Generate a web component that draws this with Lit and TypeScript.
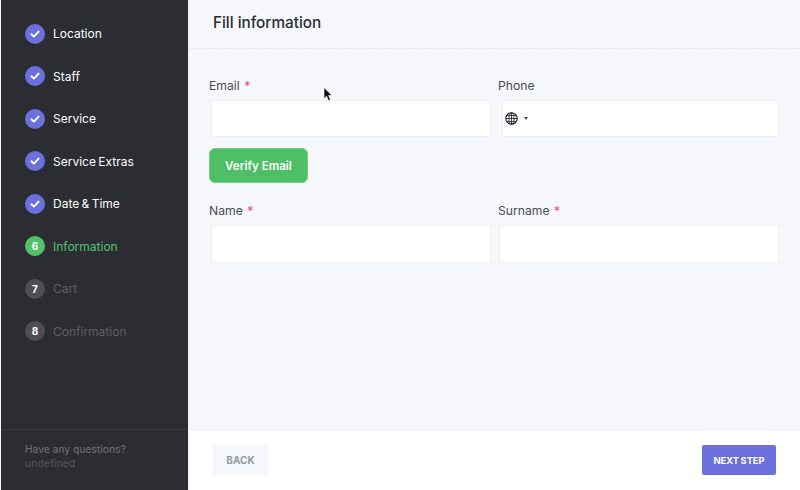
import { LitElement, html, css, svg } from "lit";
import { customElement } from "lit/decorators.js";

const steps = [
  { label: "Location", state: "done" },
  { label: "Staff", state: "done" },
  { label: "Service", state: "done" },
  { label: "Service Extras", state: "done" },
  { label: "Date & Time", state: "done" },
  { label: "Information", state: "active", n: 6 },
  { label: "Cart", state: "todo", n: 7 },
  { label: "Confirmation", state: "todo", n: 8 },
];

const check = svg`<svg width="10" height="10" viewBox="0 0 10 10"><path d="M1.4 5.3 L3.9 7.6 L8.6 2.6" fill="none" stroke="#fff" stroke-width="1.9" stroke-linecap="round" stroke-linejoin="round"/></svg>`;

const globe = svg`<svg width="13" height="13" viewBox="0 0 13 13" fill="none" stroke="#2c2e33" stroke-width="0.9"><circle cx="6.5" cy="6.5" r="5.7" stroke-width="1.2"/><ellipse cx="6.5" cy="6.5" rx="2.6" ry="5.7"/><path d="M6.5 .8V12.2M.8 6.5H12.2M1.6 3.6H11.4M1.6 9.4H11.4"/></svg>`;

@customElement("app-root")
export class AppRoot extends LitElement {
  static styles = css`
    :host { display: block; width: 800px; height: 490px; position: relative; overflow: hidden; font-family: "Inter", "Liberation Sans", sans-serif; }
    .page { display: flex; height: 490px; background: #f5f7fb; }
    .side { width: 187px; margin-left: 1px; flex: none; background: #2b2d33; display: flex; flex-direction: column; }
    .steps { flex: 1; padding-top: 12.25px; display: flex; flex-direction: column; }
    .step { height: 42.5px; display: flex; align-items: center; gap: 8px; padding-left: 24px; font-size: 12px; word-spacing: -1px; color: #fff; }
    .dot { width: 20px; height: 20px; border-radius: 50%; display: flex; align-items: center; justify-content: center; font-size: 10px; font-weight: 700; color: #fff; background: #6c70dc; }
    .active { color: #53c16c; }
    .active .dot { background: #53c16c; }
    .todo { color: #5e6066; }
    .todo .dot { background: #4d4f55; }
    .help { height: 61px; border-top: 1px solid #3a3c42; padding: 12px 0 0 24px; box-sizing: border-box; font-size: 10.2px; line-height: 14px; color: #686a70; }
    .help b { display: block; font-weight: 500; }
    .help span { color: #54565b; font-size: 10.5px; }
    .main { flex: 1; display: flex; flex-direction: column; min-width: 0; border-left: 1px solid #eceef4; }
    .head { height: 49px; flex: none; box-sizing: border-box; border-bottom: 1px dashed #e6e8ee; padding: 0 0 4px 24px; display: flex; align-items: center; font-size: 15.3px; font-weight: 500; color: #292d32; }
    .form { flex: 1; padding: 28px 20px 0 20px; display: grid; grid-template-columns: 282px 282px; column-gap: 7px; align-content: start; }
    .field { display: flex; flex-direction: column; }
    label { font-size: 12.2px; line-height: 18px; color: #4a4d53; margin-bottom: 5px; }
    label i { font-style: normal; color: #f0436c; margin-left: 1px; }
    .input { height: 37px; margin-left: 2px; box-sizing: border-box; background: #fff; border: 1px solid #eef0f6; display: flex; align-items: center; }
    .col2 { margin-right: 1px; }
    .phone { margin-left: 4px; padding-left: 2px; gap: 6px; }
    .caret { width: 0; height: 0; border-left: 2.5px solid transparent; border-right: 2.5px solid transparent; border-top: 3px solid #45474d; }
    .verify { grid-column: 1 / 3; justify-self: start; margin: 11px 0 19px; width: 99px; height: 35px; box-sizing: border-box; border: 1px solid #6bd083; border-radius: 6px; background: #4fbf67; color: #fff; font: 600 11.6px "Inter", sans-serif; padding: 0; }
    .tall { height: 38px; }
    .tall.col2 { margin-left: 1px; }
    .foot { height: 61px; flex: none; box-sizing: border-box; background: #fff; border-top: 1px solid #e9ebf1; display: flex; align-items: center; justify-content: space-between; padding: 0 24px; }
    .btn { height: 30px; font: 700 10px "Inter", sans-serif; border: 0; padding: 0; }
    .back { width: 55px; background: #f5f7fb; color: #9599a3; }
    .next { width: 74px; background: #6c70dc; color: #fff; border-radius: 2px; font-size: 9.3px; word-spacing: -0.5px; }
    .cursor { position: absolute; left: 323px; top: 87px; }
  `;

  render() {
    return html`
      <div class="page">
        <aside class="side">
          <div class="steps">
            ${steps.map(
              (s) => html`<div class="step ${s.state}">
                <span class="dot">${s.state === "done" ? check : s.n}</span>${s.label}
              </div>`
            )}
          </div>
          <div class="help"><b>Have any questions?</b><span>undefined</span></div>
        </aside>
        <main class="main">
          <div class="head">Fill information</div>
          <div class="form">
            <div class="field"><label>Email <i>*</i></label><div class="input"></div></div>
            <div class="field"><label>Phone</label><div class="input phone col2">${globe}<span class="caret"></span></div></div>
            <button class="verify">Verify Email</button>
            <div class="field"><label>Name <i>*</i></label><div class="input tall"></div></div>
            <div class="field"><label>Surname <i>*</i></label><div class="input tall col2"></div></div>
          </div>
          <div class="foot">
            <button class="btn back">BACK</button>
            <button class="btn next">NEXT STEP</button>
          </div>
        </main>
      </div>
      <svg class="cursor" width="10" height="15" viewBox="0 0 10 15"><path d="M1 .5V11.5L3.6 9.2L5.4 13.6L7.4 12.7L5.6 8.5H9Z" fill="#111" stroke="#fff" stroke-width=".6"/></svg>
    `;
  }
}
